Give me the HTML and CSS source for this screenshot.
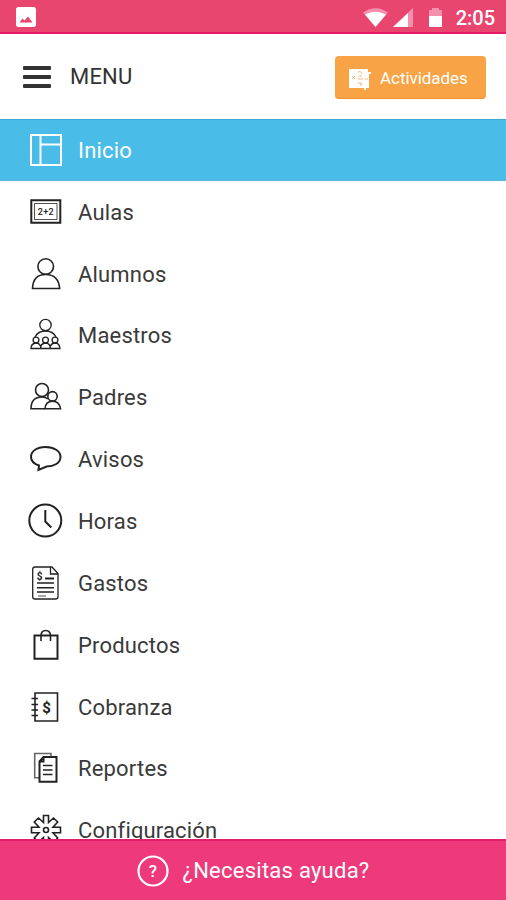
FILE: index.html
```html
<!DOCTYPE html>
<html lang="es">
<head>
<meta charset="utf-8">
<title>Menu</title>
<link rel="stylesheet" href="styles.css">
</head>
<body>
<div class="app">
  <div class="status">
    <svg class="status-photo" width="20" height="20" viewBox="0 0 20 20"><rect width="20" height="20" rx="2.500" fill="#fff"/><path d="M3.500 15.500l3-4 2 2 3.500-4 4.500 6z" fill="#e8456f"/></svg>
    <svg class="status-signals" width="82" height="22" viewBox="0 0 82 22">
      <path d="M0 5.500Q12.500-3 25 5.500L12.500 20z" fill="#f48fae"/><path d="M2 7.500Q12.500 2 23 7.500L12.500 20z" fill="#fff"/>
      <path d="M50 1v19H30z" fill="#f48fae"/><path d="M45 6v14H30z" fill="#fff"/>
      <path d="M66 3h3V1h7v2h3v8H66z" fill="#f48fae"/><path d="M66 9h13v11H66z" fill="#fff"/>
    </svg>
    <span class="clock">2:05</span>
  </div>
  <header class="header">
    <div class="burger"><i></i><i></i><i></i></div>
    <h1 class="title">MENU</h1>
    <button class="activities">
      <svg width="23" height="23" viewBox="0 0 23 23"><path d="M0 2h19v3h3v2h-2v14h-3v2h-2v-2H0z" fill="#fff"/><path d="M9 5q3-2 4 2M10 9h3M3 9l3 3M6 9l-3 3M9 12h5M16 12h3M9 15l3 3M12 15v4" fill="none" stroke="#f8b878"/></svg>
      <span>Actividades</span>
    </button>
  </header>
  <nav class="menu">
    <a class="item active"><svg viewBox="0 0 40 40"><path class="w2" d="M6 5h30v30H6zM15.500 5v30M15.500 14.500H36"/></svg><span>Inicio</span></a>
    <a class="item"><svg viewBox="0 0 40 40"><path class="w2" d="M6.300 8.200h29v22.600h-29z"/><path class="thin" d="M9.500 11.500h22.500v16H9.500z"/><text x="20.700" y="22.600" font-size="9" textLength="16">2+2</text></svg><span>Aulas</span></a>
    <a class="item"><svg viewBox="0 0 40 40"><circle cx="20.700" cy="12.500" r="7.800"/><path d="M7.500 34.500Q8 20.500 20.700 20.500T34.700 34.500z"/></svg><span>Alumnos</span></a>
    <a class="item"><svg viewBox="0 0 40 40" class="fine"><circle cx="20.500" cy="10" r="5.700"/><path d="M10 22Q13 16 20.500 16T31 22"/><circle cx="11" cy="25" r="2.900"/><circle cx="20.500" cy="25" r="2.900"/><circle cx="30" cy="25" r="2.900"/><path d="M6 33.500q0-5 5-5.500 4.500 0 5 5.500zM15.500 33.500q0-5 5-5.500 4.500 0 5 5.500zM25 33.500q0-5 5-5.500 4.500 0 5 5.500z"/></svg><span>Maestros</span></a>
    <a class="item"><svg viewBox="0 0 40 40"><circle cx="17" cy="13" r="6.500"/><path d="M20 31.700H6Q6 20 17 20q3.500 0 6 2"/><circle cx="27.500" cy="19.300" r="4.700"/><path d="M20 31.700q.5-7.500 7.500-7.500t8 7.500z"/></svg><span>Padres</span></a>
    <a class="item"><svg viewBox="0 0 40 40"><path class="w2" d="M14 26.500C8.500 24.700 6 21.500 6 18 6 12 12 8 20.500 8s15 4 15 10-6.500 9.500-14 9.500L13.500 31z"/></svg><span>Avisos</span></a>
    <a class="item"><svg viewBox="0 0 40 40"><circle class="w2" cx="20.300" cy="19.600" r="16"/><path class="w2" d="M20.300 9v11.500l6 6"/></svg><span>Horas</span></a>
    <a class="item"><svg viewBox="0 0 40 40"><path d="M27 4H10q-2.300 0-2.300 2.300v27.400q0 2.300 2.300 2.300h20.500q2.500 0 2.500-2.300V10.500zM25.500 4v7H33" class="fine"/><path d="M12 20h17M12 24.700h17M12 29h17"/><path class="w2" d="M20 15.500h9"/><path class="thin" d="M13 33h8"/><text class="bold" x="14.500" y="16.500" font-size="10">$</text></svg><span>Gastos</span></a>
    <a class="item"><svg viewBox="0 0 40 40"><path d="M9.500 10.500h23v23.300h-23z" class="w2"/><path d="M16 16V11q0-5.500 4.700-5.500T25.500 11v5"/></svg><span>Productos</span></a>
    <a class="item"><svg viewBox="0 0 40 40"><path d="M10 6h22.500v28H10z"/><path d="M6.500 11.500H13M6.500 17.500H13M6.500 23H13M6.500 28.500H13"/><text class="bold" x="21.500" y="25.500" font-size="15">$</text></svg><span>Cobranza</span></a>
    <a class="item"><svg viewBox="0 0 40 40"><path d="M26 8V5.500H9.700v24.300H14" class="gray"/><path d="M18.500 9H31.500v24.800H14.500V13.500zM18.500 9v4.500h-4" class="w2"/><path d="M18 17.500h9.500M18 22h9.500M18 26.500h9.500"/></svg><span>Reportes</span></a>
    <a class="item"><svg viewBox="0 0 40 40"><circle cx="21" cy="20" r="2.500"/><path d="M18.500 12.500V5.500h5V12.500L28.500 8 32.700 12 28 17.300H35.500V22.700H28L32.700 28 28.500 32 23.500 27.500V34.500H18.500V27.500L13.500 32 9.300 28 14 22.700H6.500V17.300H14L9.300 12 13.500 8z"/></svg><span>Configuración</span></a>
  </nav>
  <footer class="help">
    <svg width="34" height="34" viewBox="0 0 34 34"><circle cx="17" cy="17" r="14.500" fill="none" stroke="#fff" stroke-width="2.200"/><text x="17" y="23" font-size="17">?</text></svg>
    <span>¿Necesitas ayuda?</span>
  </footer>
</div>
</body>
</html>
```
FILE: styles.css
```css
* { box-sizing: border-box; }
body { margin: 0; background: #fff; font-family: Roboto, "Liberation Sans", sans-serif; }
.app { width: 506px; height: 900px; display: flex; flex-direction: column; overflow: hidden; }
.status {
  flex: none; height: 34px; display: flex; align-items: center;
  padding: 1px 11px 0 16px; background: #e8456f; border-bottom: 2px solid #e5186a; color: #fff;
}
.status-photo { margin-top: 1px; }
.status-signals { margin-left: auto; margin-right: 11px; margin-top: 2px; }
.clock { font-size: 20px; font-weight: 500; line-height: 30px; margin-top: 3px; }
.header { flex: none; height: 85px; display: flex; align-items: center; padding: 0 20px 0 23px; }
.burger { width: 28px; display: grid; gap: 5px; margin-top: 1px; }
.burger i { height: 4px; background: #333; border-radius: 1px; }
.title { margin: 0 0 0 19px; font-size: 22px; font-weight: 400; color: #333; line-height: 30px; letter-spacing: .2px; }
.activities {
  margin: 2px 0 0 auto; width: 151px; height: 43px; display: flex; align-items: center; gap: 8px;
  padding: 2px 0 0 14px; border: 0; border-bottom: 1px solid #f29422; border-radius: 4px;
  background: #f8a345; color: #fff; font: 400 17px Roboto, sans-serif; letter-spacing: -.05px;
}
.menu { flex: 1; min-height: 0; overflow: hidden; }
.item { height: 61.850px; display: flex; align-items: center; padding-left: 25px; color: #3a3a3a; }
.item span { margin: 2px 0 0 13px; font-size: 22px; line-height: 30px; letter-spacing: .18px; }
.item svg { flex: none; width: 40px; height: 40px; fill: none; stroke: #222; stroke-width: 1.600; }
.item svg text { fill: #222; stroke: none; text-anchor: middle; font-family: Roboto, sans-serif; font-weight: 500; }
.item svg .w2 { stroke-width: 2; }
.item svg .thin { stroke-width: .8; }
.item svg.fine, .item svg .fine { stroke-width: 1.300; }
.item svg .gray { stroke: #666; }
.item svg .bold { font-weight: 700; }
.item.active { background: #49bce8; color: #fff; border-top: 1px solid #3aa9d8; border-bottom: 1px solid #5cb4dc; }
.item.active svg { stroke: #fff; }
.help {
  flex: none; height: 61px; display: flex; align-items: center; justify-content: center; gap: 12px;
  background: #ee397b; border-top: 2px solid #e0206a; color: #fff; font-size: 22px; line-height: 30px;
  letter-spacing: .25px;
}
.help text { fill: #fff; text-anchor: middle; font-weight: 500; }
```
